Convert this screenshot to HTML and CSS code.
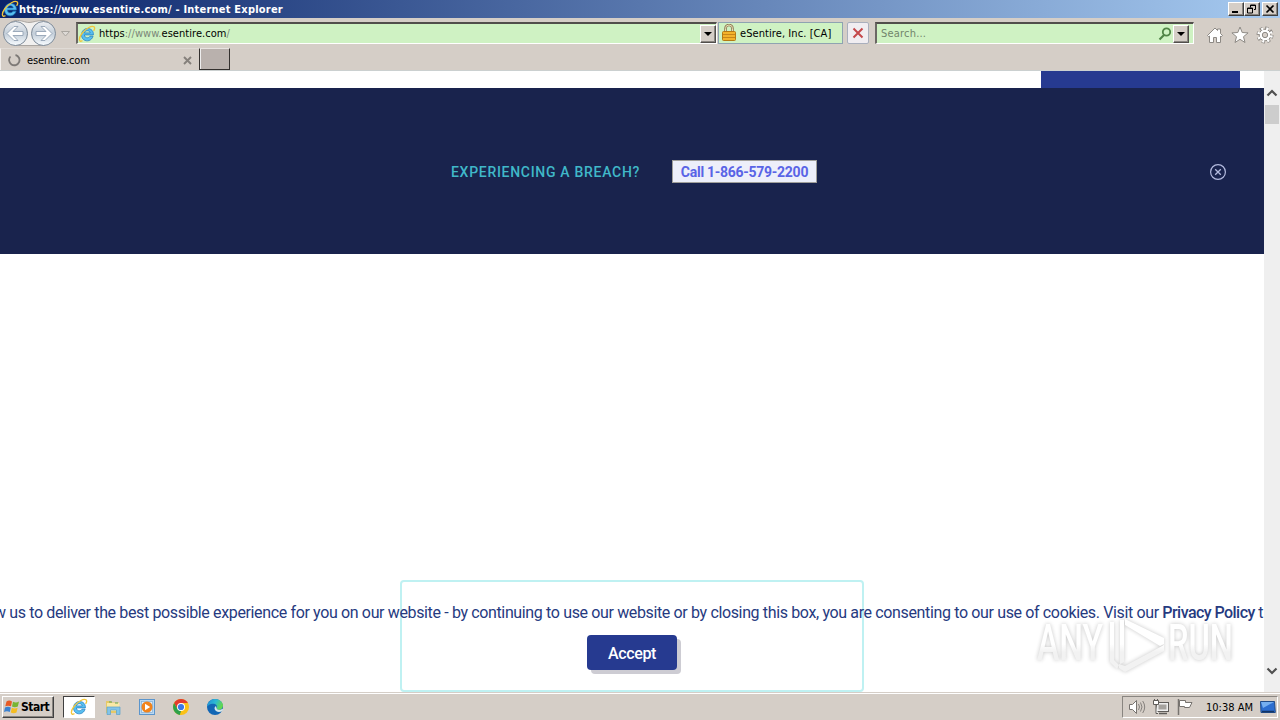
FILE: index.html
```html
<!DOCTYPE html>
<html lang="en">
<head>
    <meta charset="UTF-8">
    <meta name="viewport" content="width=device-width, initial-scale=1.0">
    <title>https://www.esentire.com/ - Internet Explorer</title>
    <link rel="stylesheet" href="styles.css">
</head>
<body>
    <!-- Shared icon -->
    <svg class="defs" width="0" height="0">
        <symbol id="ie" viewBox="0 0 18 18">
            <path d="M15.400 9.900H6.400c.1 3.400 4.300 3.700 5.600 1.300h3.100c-1.400 4.600-6.300 5.800-9.400 3.500C1.500 11.500 3.500 3.500 9.500 3.500c4 0 6.200 2.900 5.900 6.400zM6.500 7.900h5.700c-.3-2.900-5.100-2.900-5.700 0z" fill="#58bff0" stroke="#1c78bd" stroke-width=".7"/>
            <path d="M4 15.900C.8 17.500.4 13.500 3.600 9 7.500 3.400 13.800.2 16 1.800c1 .8.7 2.200-.1 3.600" fill="none" stroke="#f2c63b" stroke-width="1.300" stroke-linecap="round"/>
        </symbol>
    </svg>

    <div class="screen">
        <header class="titlebar">
            <svg class="title-icon" width="18" height="18"><use href="#ie"/></svg>
            <span class="title-text">https://www.esentire.com/ - Internet Explorer</span>
            <div class="win-buttons">
                <button class="win-btn"><svg width="12" height="10"><path d="M2 8h6" stroke="#000" stroke-width="2"/></svg></button>
                <button class="win-btn"><svg width="12" height="10"><path d="M4.500 3.500V1h5v4.500H8M4 1.500h6M1.500 4h5v5h-5zM1 4.500h6" fill="none" stroke="#000"/></svg></button>
                <button class="win-btn close"><svg width="12" height="10"><path d="M2.500 1.500l7 7M9.500 1.500l-7 7" stroke="#000" stroke-width="1.700"/></svg></button>
            </div>
        </header>

        <nav class="navbar">
            <svg class="nav-arrows" width="76" height="30">
                <defs>
                    <linearGradient id="disc" x2="0" y2="1">
                        <stop offset="0" stop-color="#eef0f3"/>
                        <stop offset=".5" stop-color="#c3ced9"/>
                        <stop offset="1" stop-color="#f8fcff"/>
                    </linearGradient>
                </defs>
                <path d="M15 2.500C22 2 25 4.500 29 4.500S38 2 44 2.500a13 13 0 0 1 0 25H15a13 13 0 0 1 0-25z" fill="#f1f0ef" stroke="#aaa6a2"/>
                <circle cx="15.500" cy="15.500" r="12" fill="url(#disc)" stroke="#7e8b99"/>
                <circle cx="43.500" cy="15.500" r="12" fill="url(#disc)" stroke="#7e8b99"/>
                <path d="M7 15.500l7-7h4L13 13.500h10v4H13l5 5h-4z" fill="#fff" stroke="#93a3b4" stroke-width=".9"/>
                <path d="M52 15.500l-7-7h-4l5 5H36v4h10l-5 5h4z" fill="#fff" stroke="#93a3b4" stroke-width=".9"/>
                <path d="M61.500 13.500h8l-4 4.500z" fill="#dedad6" stroke="#aaa6a0"/>
            </svg>
            <div class="field address">
                <svg width="18" height="18"><use href="#ie"/></svg>
                <span class="url">https<i>://www.</i>esentire.com<i>/</i></span>
                <button class="drop"></button>
            </div>
            <div class="cert">
                <svg width="14" height="18">
                    <path d="M3.500 8V4.500a3.500 3.500 0 0 1 7 0V8" fill="none" stroke="#8d7b54" stroke-width="2.600"/>
                    <path d="M3.500 8V4.500a3.500 3.500 0 0 1 7 0V8" fill="none" stroke="#e9ddb4" stroke-width="1"/>
                    <rect x=".5" y="7.500" width="13" height="9" rx="1" fill="#f3b32b" stroke="#b57a13"/>
                    <path d="M1 10.500h12M1 13.500h12" stroke="#c78618"/>
                </svg>
                <span>eSentire, Inc. [CA]</span>
            </div>
            <button class="stop"><svg width="12" height="12"><path d="M1.500 1.500l9 9M10.500 1.500l-9 9" stroke="#c4484b" stroke-width="2"/></svg></button>
            <div class="field search">
                <span class="placeholder">Search...</span>
                <svg width="14" height="14"><circle cx="8.500" cy="5" r="3.700" fill="none" stroke="#508446" stroke-width="1.800"/><path d="M6 8l-4.500 4.500" stroke="#508446" stroke-width="2.200"/></svg>
                <button class="drop"></button>
            </div>
            <div class="tools">
                <svg width="18" height="18"><path d="M1.500 9.500L9 2l2.500 2.500V3h3v4.500l2 2-1.300 1.200L14.500 10v6.500h-4v-5h-3v5h-4V10l-.8.700z" fill="#fff" stroke="#8d8984"/></svg>
                <svg width="18" height="18"><path d="M9 1l2.200 5.500 5.900.4-4.600 3.800 1.500 5.800L9 13.300l-5 3.200 1.500-5.800L.9 6.900l5.900-.4z" fill="#fff" stroke="#8d8984"/></svg>
                <svg width="18" height="18">
                    <circle cx="9" cy="9" r="6.700" fill="none" stroke="#8d8984" stroke-width="3.600" stroke-dasharray="3 2.262"/>
                    <circle cx="9" cy="9" r="5.800" fill="#fff" stroke="#8d8984"/>
                    <circle cx="9" cy="9" r="6.500" fill="none" stroke="#fff" stroke-width="2.600" stroke-dasharray="2 3.105" stroke-dashoffset="-.5"/>
                    <circle cx="9" cy="9" r="2.700" fill="#d6cfc8" stroke="#8d8984"/>
                </svg>
            </div>
        </nav>

        <div class="tabs">
            <div class="tab">
                <svg width="14" height="14"><path d="M8.500 2a5.200 5.200 0 1 1-5 1.500" fill="none" stroke="#7d7976" stroke-width="1.800"/></svg>
                <span>esentire.com</span>
                <svg class="tab-close" width="9" height="9"><path d="M1 1l7 7M8 1L1 8" stroke="#85807b" stroke-width="1.900"/></svg>
            </div>
            <div class="new-tab"></div>
        </div>

        <main class="browser">
            <div class="page">
                <div class="page-top"><div class="page-top-btn"></div></div>
                <section class="breach">
                    <span class="breach-label">EXPERIENCING A BREACH?</span>
                    <a class="breach-call">Call 1-866-579-2200</a>
                    <svg class="breach-close" width="18" height="18"><circle cx="9" cy="9" r="7.400" fill="none" stroke="#b4bbdf" stroke-width="1.200"/><path d="M6.200 6.200l5.600 5.600M11.800 6.200l-5.600 5.600" stroke="#b4bbdf" stroke-width="1.300"/></svg>
                </section>
                <section class="cookie">
                    <p class="cookie-text"><span class="cookie-main">w us to deliver the best possible experience for you on our website - by continuing to use our website or by closing this box, you are consenting to our use of cookies. Visit our</span> <b>Privacy Policy</b> t</p>
                    <button class="accept">Accept</button>
                </section>
            </div>
            <div class="scrollbar">
                <svg width="16" height="34"><path d="M3.500 24.500L8 20l4.500 4.500" fill="none" stroke="#505050" stroke-width="2.200"/></svg>
                <div class="thumb"></div>
                <svg class="down" width="16" height="16"><path d="M3.500 5.500L8 10l4.500-4.500" fill="none" stroke="#505050" stroke-width="2.200"/></svg>
            </div>
        </main>

        <footer class="taskbar">
            <button class="start">
                <svg width="16" height="16">
                    <path d="M2.500 2.500Q5 .8 8 2.400L7 7.300Q4 6 1.300 7.300z" fill="#e85b25"/>
                    <path d="M9 2.700q3 1.500 6-.2L13.800 7.500Q11 9 8 7.600z" fill="#78b532"/>
                    <path d="M1 8.400q3-1.400 5.800 0L5.800 13Q3 11.700 0 13z" fill="#3c82d0"/>
                    <path d="M7.800 8.700q3 1.400 5.800 0L12.500 13.500Q9.500 15 6.800 13.500z" fill="#f5bd22"/>
                </svg>
                <span>Start</span>
            </button>
            <div class="task active"><svg width="18" height="18"><use href="#ie"/></svg></div>
            <div class="task">
                <svg width="18" height="18"><path d="M2 3h5l1 1.500h7V15H2z" fill="#e6c967"/><path d="M3 5h12.500v8H3z" fill="#f9e9a5"/><path d="M5 4h3M11 5h3" stroke="#60a55b"/><path d="M3 9h13v7.500h-3.500V12h-6v4.500H3z" fill="#82c4e8" stroke="#5aa0ca" stroke-width=".7"/></svg>
            </div>
            <div class="task">
                <svg width="18" height="18"><rect x="1.500" y="1.500" width="15" height="15" fill="#b9d8f2" stroke="#5b95cc"/><rect x="3.500" y="3.500" width="11" height="11" fill="#dcecf8" stroke="#82add3" stroke-width=".7"/><circle cx="9" cy="9" r="5.500" fill="#f1831c"/><path d="M7 5.800v6.400L12.200 9z" fill="#fff"/></svg>
            </div>
            <div class="task">
                <svg width="18" height="18"><circle cx="9" cy="9" r="8" fill="#fbc116"/><path d="M2.100 5A8 8 0 0 1 15.900 5H9L5.500 11z" fill="#e33b2e"/><path d="M2.100 5l3.400 6L9 13l-1 3.900A8 8 0 0 1 2.100 5z" fill="#2da14b"/><path d="M12.500 11L9 17H8l1.500-4z" fill="#fbc116"/><circle cx="9" cy="9" r="4" fill="#fff"/><circle cx="9" cy="9" r="3.100" fill="#3b78e7"/></svg>
            </div>
            <div class="task">
                <svg width="18" height="18">
                    <defs><linearGradient id="edge" x2="1" y2=".4"><stop offset="0" stop-color="#2089d5"/><stop offset=".55" stop-color="#2cb9d5"/><stop offset="1" stop-color="#63d850"/></linearGradient></defs>
                    <circle cx="9" cy="9" r="8" fill="#1266b5"/>
                    <path d="M1 8.500C2 3 5.500 1 9 1c4.500 0 8 3 8 6.500 0 3-2.500 4.500-5 4.200-1.500-.2-1.800-1-1.200-1.700C12 7.500 9 5 6 5.800 3 6.400 1.500 8 1 8.500z" fill="url(#edge)"/>
                    <path d="M10 8c-2 1-2 3.500 0 5 2 1.400 4.500 1 6.300 0l1.200-2-2 .3c-2 1-4.500.600-4.800-.8z" fill="#d5e6ea"/>
                </svg>
            </div>
            <div class="tray">
                <svg width="18" height="18"><path d="M1.500 6.500h3l4-4v13l-4-4h-3z" fill="#fff" stroke="#77736f"/><path d="M10.500 6q2 3 0 6M12.500 4.500q3 4.500 0 9M14.700 3q4 6 0 12" fill="none" stroke="#85817d"/></svg>
                <svg width="18" height="18"><rect x="4.500" y="4.500" width="12" height="9" fill="#eee" stroke="#5f5c59"/><rect x="6.500" y="6.500" width="8" height="5" fill="#a5a29e"/><path d="M7 15.500h8" stroke="#5f5c59" stroke-width="1.500"/><path d="M1.500 2.500h5v4h-5zM2.500 1v1.500M5.500 1v1.500M4 7v8.500h2" fill="#fff" stroke="#5f5c59"/></svg>
                <svg width="18" height="18"><path d="M2.500 1v16" stroke="#77736f" stroke-width="1.500"/><path d="M3.500 2.500h6v2h6.500L13.500 9.500h-5v-1h-5z" fill="#fff" stroke="#77736f"/></svg>
                <span class="clock">10:38 AM</span>
                <svg class="desktop" width="16" height="14"><path d="M.5 1.500h14l.8 11H1z" fill="#2c6ed0" stroke="#1f4b88"/><path d="M1 2h13L3 8z" fill="#75aff0"/><path d="M2 11.500h12" stroke="#113465" stroke-width="1.500"/></svg>
            </div>
        </footer>

        <!-- Watermark over the page -->
        <svg class="watermark" width="210" height="70">
            <defs>
                <linearGradient id="fade" gradientUnits="userSpaceOnUse" x1="0" y1="10" x2="0" y2="64">
                    <stop offset=".45" stop-color="#fff"/>
                    <stop offset=".6" stop-color="#eee"/>
                </linearGradient>
            </defs>
            <g fill="url(#fade)" class="mark">
                <text x="6" y="50" textLength="66" lengthAdjust="spacingAndGlyphs">ANY</text>
                <text x="137" y="50" textLength="65" lengthAdjust="spacingAndGlyphs">RUN</text>
                <path d="M79 12h4v38l5 5-2 4-7-7zM89 10h4v42l-4 2zM94 9l39 19v6l-4 2L94 15zM133 35v6L94 62l-6-4v-4l6 2z"/>
            </g>
        </svg>
    </div>
</body>
</html>
```

FILE: styles.css
```css
* {
    box-sizing: border-box;
}

body {
    margin: 0;
    font-family: "DejaVu Sans Condensed", "DejaVu Sans", sans-serif;
    font-size: 11px;
    color: #000;
}

svg {
    display: block;
    flex: none;
}

button {
    font-family: inherit;
    padding: 0;
}

.defs {
    position: absolute;
}

.screen {
    position: relative;
    width: 1280px;
    height: 720px;
    display: flex;
    flex-direction: column;
    overflow: hidden;
    background: #d5cec7;
}

/* Title bar */
.titlebar {
    height: 18px;
    display: flex;
    align-items: center;
    padding: 0 2px 0 1px;
    background: linear-gradient(to right, #0a246a, #a6caf0);
}

.title-text {
    color: #fff;
    font-weight: bold;
    white-space: nowrap;
    letter-spacing: 0.21px;
}

.win-buttons {
    display: flex;
    margin-left: auto;
}

.win-btn {
    width: 16px;
    height: 14px;
    display: flex;
    align-items: center;
    justify-content: center;
    background: #d5cec7;
    border: 1px solid;
    border-color: #fff #404040 #404040 #fff;
    box-shadow: inset -1px -1px #898580;
}

.win-btn.close {
    margin-left: 2px;
}

/* Address row */
.navbar {
    height: 30px;
    display: flex;
    align-items: flex-start;
}

.field {
    height: 22px;
    margin-top: 4px;
    display: flex;
    align-items: center;
    background: #cff2c3;
    border: 1px solid #fff;
    border-top: 2px solid #514e4b;
    border-left: 2px solid #6b6864;
}

.address {
    width: 641px;
}

.url {
    margin-left: 3px;
    letter-spacing: 0.05px;
}

.url i {
    font-style: normal;
    color: #7b8778;
}

.drop {
    width: 16px;
    height: 18px;
    margin-left: auto;
    background: #d5cec7;
    border: 1px solid;
    border-color: #fff #514e4b #514e4b #fff;
    box-shadow: inset -1px -1px #898580;
    display: flex;
    align-items: center;
    justify-content: center;
}

.drop::before {
    content: "";
    border: 4px solid transparent;
    border-top-color: #000;
    border-bottom: 0;
}

.cert {
    width: 125px;
    height: 22px;
    margin: 4px 0 0 1px;
    padding-left: 3px;
    display: flex;
    align-items: center;
    gap: 4px;
    background: #cff2c3;
    border: 1px solid #8ea3b1;
    white-space: nowrap;
    letter-spacing: 0.08px;
}

.stop {
    width: 22px;
    height: 22px;
    margin: 4px 0 0 4px;
    display: flex;
    align-items: center;
    justify-content: center;
    background: #f0edf1;
    border: 1px solid #a9afbd;
    border-radius: 2px;
}

.search {
    width: 319px;
    margin-left: 6px;
    padding-right: 4px;
}

.placeholder {
    margin-left: 4px;
    margin-right: auto;
    color: #71846b;
    letter-spacing: 0.2px;
}

.search .drop {
    margin-left: 1px;
}

.tools {
    display: flex;
    gap: 7px;
    margin: 8px 0 0 12px;
}

/* Tabs */
.tabs {
    height: 23px;
    display: flex;
    border-bottom: 1px solid #cbd0d0;
}

.tab {
    width: 199px;
    height: 22px;
    padding: 1px 7px 0 6px;
    display: flex;
    align-items: center;
    gap: 6px;
    border-left: 1px solid #f5f2ef;
    border-top: 1px solid #e0dbd6;
}

.tab span {
    letter-spacing: -0.15px;
}

.tab-close {
    margin-left: auto;
}

.new-tab {
    width: 31px;
    height: 22px;
    background: #b9b1ad;
    border: 1px solid #33302e;
    border-top-color: #e8e4e1;
    box-shadow: inset 1px 0 #eee;
}

/* Page area */
.browser {
    height: 621px;
    display: flex;
    background: #fff;
}

.page {
    width: 1264px;
    display: flex;
    flex-direction: column;
    overflow: hidden;
}

.page-top {
    height: 17px;
    display: flex;
    justify-content: flex-end;
    padding-right: 24px;
}

.page-top-btn {
    width: 199px;
    background: #263a90;
}

.breach {
    height: 166px;
    display: flex;
    align-items: center;
    padding: 1px 37px 0 451px;
    background: #19234d;
    font-family: Roboto, sans-serif;
    font-size: 14px;
}

.breach-label {
    width: 221px;
    color: #40b8c9;
    font-weight: 500;
    letter-spacing: 0.7px;
    white-space: nowrap;
}

.breach-call {
    width: 145px;
    height: 23px;
    line-height: 22px;
    text-align: center;
    color: #5964e6;
    font-weight: bold;
    letter-spacing: -0.27px;
    background: #edeffa;
    border: 1px solid #a09f9a;
    white-space: nowrap;
}

.breach-close {
    margin-left: auto;
}

.cookie {
    width: 464px;
    height: 112px;
    margin: auto auto 0;
    display: flex;
    flex-direction: column;
    align-items: center;
    border: 2px solid #bff1f2;
    border-radius: 4px;
    font-family: Roboto, sans-serif;
    color: #263a80;
}

.cookie-text {
    width: 1276px;
    margin: 21px 0 12px;
    font-size: 16px;
    line-height: 20px;
    white-space: nowrap;
    letter-spacing: -0.36px;
}

.cookie-text b {
    font-weight: 500;
    letter-spacing: -0.55px;
}

.accept {
    width: 90px;
    height: 35px;
    flex: none;
    padding-top: 2px;
    font-size: 16px;
    font-weight: 500;
    letter-spacing: -0.4px;
    color: #fff;
    background: #263a90;
    border: 0;
    border-radius: 4px;
    box-shadow: 4px 4px #cdccd3;
}

.scrollbar {
    width: 16px;
    display: flex;
    flex-direction: column;
    background: #efefef;
}

.thumb {
    width: 14px;
    height: 19px;
    margin-left: 1px;
    background: #cdcdcd;
}

.down {
    margin: auto 0 13px;
}

/* Taskbar */
.taskbar {
    height: 28px;
    display: flex;
    align-items: center;
    padding: 1px 2px 0;
    border-top: 1px solid #d5cec7;
    box-shadow: inset 0 1px #fff;
}

.start {
    width: 52px;
    height: 22px;
    display: flex;
    align-items: center;
    gap: 1px;
    padding-left: 1px;
    margin-right: 9px;
    font-size: 12px;
    font-weight: bold;
    letter-spacing: -0.5px;
    background: #d5cec7;
    border: 1px solid;
    border-color: #fff #404040 #404040 #fff;
    box-shadow: inset -1px -1px #898580;
}

.task {
    width: 32px;
    height: 22px;
    margin-right: 2px;
    display: flex;
    align-items: center;
    justify-content: center;
}

.task.active {
    background: #fff;
    border: 1px solid;
    border-color: #404040 #fff #fff #404040;
}

.tray {
    width: 156px;
    height: 22px;
    margin-left: auto;
    padding-left: 5px;
    display: flex;
    align-items: center;
    gap: 6px;
    border: 1px solid;
    border-color: #898580 #fff #fff #898580;
}

.clock {
    margin-left: 6px;
    white-space: nowrap;
}

.desktop {
    margin-left: 1px;
}

/* Watermark */
.watermark {
    position: absolute;
    left: 1031px;
    top: 610px;
    font-family: Roboto, sans-serif;
    font-size: 50px;
    font-weight: 500;
}

.mark {
    opacity: 0.75;
    filter: drop-shadow(0 0 2px rgba(0, 0, 0, 0.3));
}
```
